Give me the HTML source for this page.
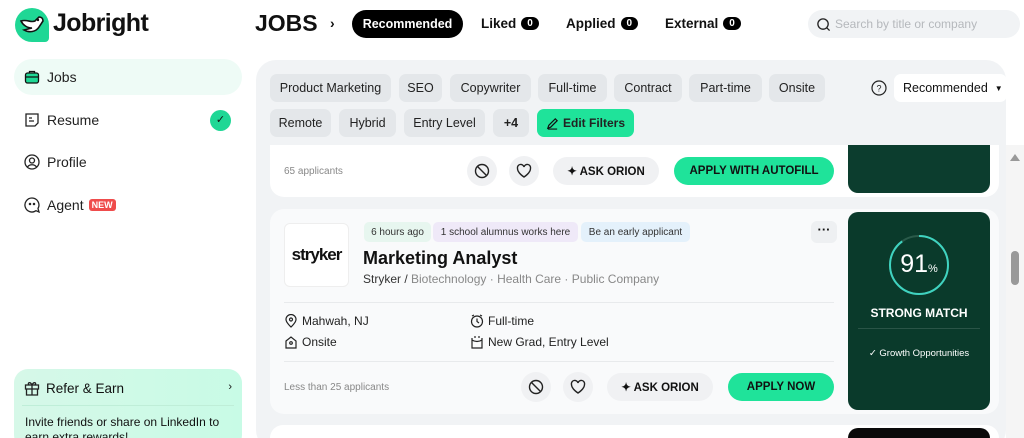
<!DOCTYPE html>
<html style="width:1024px;height:438px;overflow:hidden"><head><style>
*{box-sizing:border-box;margin:0;padding:0}
body{width:1024px;height:438px;overflow:hidden;background:#fff;font-family:"Liberation Sans",sans-serif;color:#111;position:relative}
.abs{position:absolute}
.nav{position:absolute;left:14px;width:228px;height:36px;border-radius:18px;display:flex;align-items:center;padding-left:10px;font-size:14px;color:#222}
.nav svg{margin-right:7px}
.tab{position:absolute;top:16px;font-size:13.5px;font-weight:bold;display:flex;align-items:center}
.cnt{background:#000;color:#fff;font-size:10px;border-radius:8px;padding:1px 6px;margin-left:5px}
.chip{position:absolute;height:28px;background:#e4e7ea;border-radius:7px;font-size:12.5px;color:#222;display:flex;align-items:center;justify-content:center;white-space:nowrap}
.btn{position:absolute;height:28px;border-radius:14px;display:flex;align-items:center;justify-content:center;font-size:11.5px;font-weight:bold;white-space:nowrap}
.circ{position:absolute;width:30px;height:30px;border-radius:15px;background:#f0f1f3;display:flex;align-items:center;justify-content:center}
.tag{position:absolute;top:222px;height:20px;border-radius:5px;font-size:10px;display:flex;align-items:center;justify-content:center;color:#333;white-space:nowrap}
.info{position:absolute;font-size:12px;color:#222;display:flex;align-items:center}
.info svg{margin-right:4px}
</style></head><body>
<!-- logo -->
<svg class="abs" style="left:14px;top:7px" width="36" height="36" viewBox="0 0 36 36"><path d="M18 1a17 17 0 1 0 0 34h13a4 4 0 0 0 4-4V18A17 17 0 0 0 18 1z" fill="#1fd795"/><path d="M7 14c6-2 10 2 14 0l4-4c3 0 4 2 4 4l-4 6c-3 5-10 6-15 3l8-2c-5 0-9-3-11-7z" fill="#fff" stroke="#111" stroke-width="1.6"/><circle cx="24" cy="13" r="1.2" fill="#111"/></svg>
<div class="abs" style="left:53px;top:9px;font-size:25px;font-weight:bold;letter-spacing:-0.6px">Jobright</div>
<!-- sidebar -->
<div class="nav" style="top:59px;background:#eefbf6"><svg width="16" height="16" viewBox="0 0 16 16"><rect x="1.5" y="4" width="13" height="10" rx="2" fill="#1fd795" stroke="#111" stroke-width="1.3"/><path d="M5.5 4V2.5h5V4M1.5 8h13" stroke="#111" stroke-width="1.3" fill="none"/></svg>Jobs</div>
<div class="nav" style="top:102px"><svg width="16" height="16" viewBox="0 0 16 16" fill="none" stroke="#222" stroke-width="1.3"><path d="M2 2h12v9l-3 3H2z"/><path d="M5 6h3M5 9h5"/></svg>Resume</div>
<div class="abs" style="left:210px;top:110px;width:21px;height:21px;border-radius:11px;background:#1fd795;color:#111;font-size:11px;text-align:center;line-height:21px">✓</div>
<div class="nav" style="top:144px"><svg width="16" height="16" viewBox="0 0 16 16" fill="none" stroke="#222" stroke-width="1.3"><circle cx="8" cy="8" r="7"/><circle cx="8" cy="6.5" r="2.5"/><path d="M3.5 13c2-3 7-3 9 0"/></svg>Profile</div>
<div class="nav" style="top:187px"><svg width="16" height="16" viewBox="0 0 16 16" fill="none" stroke="#222" stroke-width="1.3"><path d="M8 1a7 7 0 1 0 4 12.7L15 15l-1-3.5A7 7 0 0 0 8 1z"/><circle cx="6" cy="7" r=".6" fill="#222"/><circle cx="10" cy="7" r=".6" fill="#222"/></svg>Agent<span style="background:#ef4c4c;color:#fff;font-size:9px;font-weight:bold;border-radius:3px;padding:1px 3px;margin-left:5px">NEW</span></div>
<div class="abs" style="left:14px;top:369px;width:228px;height:80px;border-radius:14px;background:linear-gradient(90deg,#d6f8e8,#c8fbe6)">
<div style="position:absolute;left:10px;top:11px;font-size:13.5px;display:flex;align-items:center"><svg width="16" height="16" viewBox="0 0 16 16" fill="none" stroke="#222" stroke-width="1.3" style="margin-right:6px"><rect x="1.5" y="5" width="13" height="4"/><path d="M2.5 9v6h11V9M8 5v10M8 5C6 1 3 3 5 5M8 5c2-4 5-2 3 0"/></svg>Refer &amp; Earn</div>
<div style="position:absolute;right:10px;top:12px;font-size:11px">›</div>
<div style="position:absolute;left:8px;right:8px;top:36px;border-top:1px solid #bfeed8"></div>
<div style="position:absolute;left:11px;top:46px;font-size:12px;line-height:15px">Invite friends or share on LinkedIn to earn extra rewards!</div></div>
<!-- header -->
<div class="abs" style="left:255px;top:10px;font-size:23px;font-weight:bold">JOBS</div>
<div class="abs" style="left:330px;top:15px;font-size:14px;font-weight:bold">›</div>
<div class="abs" style="left:352px;top:10px;width:111px;height:28px;border-radius:14px;background:#000;color:#fff;font-size:12.5px;font-weight:bold;text-align:center;line-height:28px">Recommended</div>
<div class="tab" style="left:481px">Liked<span class="cnt">0</span></div>
<div class="tab" style="left:566px">Applied<span class="cnt">0</span></div>
<div class="tab" style="left:665px">External<span class="cnt">0</span></div>
<div class="abs" style="left:808px;top:10px;width:212px;height:28px;border-radius:14px;background:#f1f3f5;display:flex;align-items:center;padding-left:8px;font-size:12px;color:#b5b8bc"><svg width="15" height="15" viewBox="0 0 16 16" fill="none" stroke="#222" stroke-width="1.4" style="margin-right:4px"><circle cx="7.5" cy="7.5" r="5.5"/><path d="M11.5 11.5l3 3"/></svg>Search by title or company</div>
<!-- main panel -->
<div class="abs" style="left:256px;top:60px;width:750px;height:390px;border-radius:20px;background:#f1f3f5"></div>
<div class="chip" style="left:270px;top:74px;width:121px">Product Marketing</div>
<div class="chip" style="left:399px;top:74px;width:43px">SEO</div>
<div class="chip" style="left:450px;top:74px;width:81px">Copywriter</div>
<div class="chip" style="left:538px;top:74px;width:69px">Full-time</div>
<div class="chip" style="left:614px;top:74px;width:68px">Contract</div>
<div class="chip" style="left:689px;top:74px;width:73px">Part-time</div>
<div class="chip" style="left:769px;top:74px;width:56px">Onsite</div>
<div class="chip" style="left:270px;top:109px;width:61px">Remote</div>
<div class="chip" style="left:339px;top:109px;width:57px">Hybrid</div>
<div class="chip" style="left:404px;top:109px;width:81px">Entry Level</div>
<div class="chip" style="left:493px;top:109px;width:36px;font-weight:bold">+4</div>
<div class="chip" style="left:537px;top:109px;width:97px;background:#1fe39a;font-weight:bold;font-size:12px"><svg width="13" height="13" viewBox="0 0 14 14" fill="none" stroke="#111" stroke-width="1.3" style="margin-right:4px"><path d="M2 12l1-3 7-7 2 2-7 7zM2 13h10"/></svg>Edit Filters</div>
<svg class="abs" style="left:871px;top:80px" width="16" height="16" viewBox="0 0 16 16" fill="none" stroke="#222" stroke-width="1.2"><circle cx="8" cy="8" r="7"/><text x="8" y="11.5" font-size="9" text-anchor="middle" fill="#222" stroke="none" font-family="Liberation Sans">?</text></svg>
<div class="abs" style="left:894px;top:74px;width:113px;height:28px;border-radius:7px;background:#fff;font-size:12.5px;display:flex;align-items:center;padding-left:9px">Recommended<span style="font-size:8px;margin-left:7px">▼</span></div>
<!-- card 1 -->
<div class="abs" style="left:270px;top:145px;width:729px;height:52px;border-radius:0 0 14px 14px;background:#fff"></div>
<div class="abs" style="left:284px;top:166px;font-size:10px;color:#888">65 applicants</div>
<div class="circ" style="left:467px;top:156px"><svg width="16" height="16" viewBox="0 0 16 16" fill="none" stroke="#222" stroke-width="1.4"><circle cx="8" cy="8" r="6.5"/><path d="M3.5 3.5l9 9"/></svg></div>
<div class="circ" style="left:509px;top:156px"><svg width="16" height="16" viewBox="0 0 16 16" fill="none" stroke="#222" stroke-width="1.4"><path d="M8 14S1.5 10 1.5 5.5A3.2 3.2 0 0 1 8 4a3.2 3.2 0 0 1 6.5 1.5C14.5 10 8 14 8 14z"/></svg></div>
<div class="btn" style="left:553px;top:157px;width:106px;background:#f0f1f3;color:#111">✦ ASK ORION</div>
<div class="btn" style="left:674px;top:157px;width:160px;background:#1fe39a;color:#111">APPLY WITH AUTOFILL</div>
<div class="abs" style="left:848px;top:145px;width:142px;height:48px;border-radius:0 0 10px 10px;background:#0c3d2e"></div>
<!-- card 2 -->
<div class="abs" style="left:270px;top:209px;width:729px;height:205px;border-radius:14px;background:#f9fafb"></div>
<div class="abs" style="left:284px;top:223px;width:65px;height:64px;border-radius:6px;background:#fff;border:1px solid #eee;font-size:17px;font-weight:bold;text-align:center;line-height:62px;letter-spacing:-1px">stryker</div>
<div class="tag" style="left:364px;width:67px;background:#e7f6ef">6 hours ago</div>
<div class="tag" style="left:433px;width:145px;background:#efe9f8">1 school alumnus works here</div>
<div class="tag" style="left:581px;width:109px;background:#e4f1fb">Be an early applicant</div>
<div class="abs" style="left:811px;top:221px;width:26px;height:22px;border-radius:6px;background:#eef0f2;text-align:center;font-size:13px;font-weight:bold;line-height:18px">···</div>
<div class="abs" style="left:363px;top:248px;font-size:18px;font-weight:bold;color:#111">Marketing Analyst</div>
<div class="abs" style="left:363px;top:272px;font-size:12px;color:#333">Stryker / <span style="color:#888">Biotechnology · Health Care · Public Company</span></div>
<div class="abs" style="left:284px;top:302px;width:550px;border-top:1px solid #e8eaec"></div>
<div class="info" style="left:284px;top:314px"><svg width="14" height="14" viewBox="0 0 14 14" fill="none" stroke="#222" stroke-width="1.2"><path d="M7 13s5-4.5 5-7.5a5 5 0 0 0-10 0C2 8.5 7 13 7 13z"/><circle cx="7" cy="5.5" r="1.5"/></svg>Mahwah, NJ</div>
<div class="info" style="left:284px;top:335px"><svg width="14" height="14" viewBox="0 0 14 14" fill="none" stroke="#222" stroke-width="1.2"><path d="M2 6l5-4 5 4v7H2z"/><circle cx="7" cy="8" r="1.3"/></svg>Onsite</div>
<div class="info" style="left:470px;top:314px"><svg width="14" height="14" viewBox="0 0 14 14" fill="none" stroke="#222" stroke-width="1.2"><circle cx="7" cy="7.5" r="5.5"/><path d="M7 4.5v3l2 1.5M2 2l2-1M12 2l-2-1"/></svg>Full-time</div>
<div class="info" style="left:470px;top:335px"><svg width="14" height="14" viewBox="0 0 14 14" fill="none" stroke="#222" stroke-width="1.2"><path d="M2 3v10h10V3M2 5c3 2 7 2 10 0M5 1v2M9 1v2"/></svg>New Grad, Entry Level</div>
<div class="abs" style="left:284px;top:361px;width:550px;border-top:1px solid #e8eaec"></div>
<div class="abs" style="left:284px;top:382px;font-size:10px;color:#888">Less than 25 applicants</div>
<div class="circ" style="left:521px;top:372px"><svg width="16" height="16" viewBox="0 0 16 16" fill="none" stroke="#222" stroke-width="1.4"><circle cx="8" cy="8" r="6.5"/><path d="M3.5 3.5l9 9"/></svg></div>
<div class="circ" style="left:563px;top:372px"><svg width="16" height="16" viewBox="0 0 16 16" fill="none" stroke="#222" stroke-width="1.4"><path d="M8 14S1.5 10 1.5 5.5A3.2 3.2 0 0 1 8 4a3.2 3.2 0 0 1 6.5 1.5C14.5 10 8 14 8 14z"/></svg></div>
<div class="btn" style="left:607px;top:373px;width:106px;background:#f0f1f3;color:#111">✦ ASK ORION</div>
<div class="btn" style="left:728px;top:373px;width:106px;background:#1fe39a;color:#111">APPLY NOW</div>
<div class="abs" style="left:848px;top:212px;width:142px;height:198px;border-radius:10px;background:#0a3a2b;color:#fff">
<svg style="position:absolute;left:40px;top:22px" width="62" height="62" viewBox="0 0 62 62"><circle cx="31" cy="31" r="29" fill="none" stroke="#2a5a4a" stroke-width="2"/><circle cx="31" cy="31" r="29" fill="none" stroke="#3fd3c0" stroke-width="2" stroke-dasharray="164 182" transform="rotate(-90 31 31)"/></svg>
<div style="position:absolute;left:0;width:142px;top:38px;text-align:center;font-size:25px">91<span style="font-size:11px">%</span></div>
<div style="position:absolute;left:0;width:142px;top:94px;text-align:center;font-size:12px;font-weight:bold">STRONG MATCH</div>
<div style="position:absolute;left:10px;width:122px;top:116px;border-top:1px solid #2a5447"></div>
<div style="position:absolute;left:0;width:142px;top:136px;text-align:center;font-size:9.5px">✓ Growth Opportunities</div></div>
<!-- card 3 -->
<div class="abs" style="left:270px;top:425px;width:729px;height:13px;border-radius:14px 14px 0 0;background:#fff"></div>
<div class="abs" style="left:848px;top:428px;width:142px;height:10px;border-radius:10px 10px 0 0;background:#0a0a0a"></div>
<!-- scrollbar -->
<div class="abs" style="left:1006px;top:145px;width:18px;height:293px;background:#f5f5f5"></div>
<div class="abs" style="left:1010px;top:154px;width:0;height:0;border-left:5px solid transparent;border-right:5px solid transparent;border-bottom:7px solid #999"></div>
<div class="abs" style="left:1011px;top:251px;width:8px;height:34px;border-radius:4px;background:#999"></div>
</body></html>
